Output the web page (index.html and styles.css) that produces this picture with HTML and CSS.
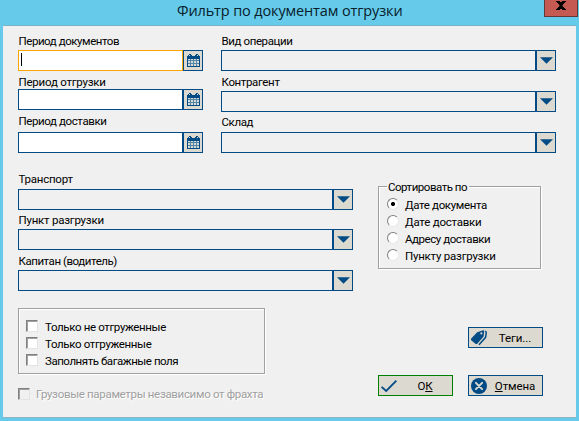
FILE: index.html
```html
<!DOCTYPE html>
<html lang="ru">
<head>
<meta charset="utf-8">
<title>Фильтр по документам отгрузки</title>
<link rel="stylesheet" href="styles.css">
</head>
<body>
<svg width="0" height="0" class="defs">
  <symbol id="cal" viewBox="0 0 13 13"><path class="ink" d="M0 2h1V1h1V0h2v1h1v1h3V1h1V0h2v1h1v1h1v11H0z"/><path class="holes" d="M2 1h1v1H2zM10 1h1v1h-1zM1 5h2v1H1zM4 5h2v1H4zM7 5h2v1H7zM10 5h2v1h-2zM1 7h2v2H1zM4 7h2v2H4zM7 7h2v2H7zM10 7h2v2h-2zM1 10h2v2H1zM4 10h2v2H4zM7 10h2v2H7zM10 10h2v2h-2z"/><path class="rules" d="M1 6h11v1H1zM1 9h11v1H1zM3 5h1v7H3zM6 5h1v7H6zM9 5h1v7H9z"/></symbol>
  <symbol id="arrow" viewBox="0 0 13 7"><path class="ink" d="M0 .3h13L6.5 6.8z"/></symbol>
</svg>
<div class="window">
  <header class="titlebar">
    <h1>Фильтр по документам отгрузки</h1>
    <button class="close"><svg width="10" height="9" viewBox="0 0 10 9"><path d="M0 0h4v1h2V0h4v1H9v1H8v1H7v1H6.500v1H7v1h1v1h1v1h1v1H6V8H4v1H0V8h1V7h1V6h1V5h.5V4H3V3H2V2H1V1H0z"/></svg></button>
  </header>
  <main class="client">
    <section class="top">
      <div class="periods">
        <div class="field h17"><label class="w1">Период документов</label><div class="control focus"><span class="input"><i class="caret"></i></span><button class="pick"><svg width="13" height="13"><use href="#cal"/></svg></button></div></div>
        <div class="field h15"><label class="w2">Период отгрузки</label><div class="control"><span class="input"></span><button class="pick"><svg width="13" height="13"><use href="#cal"/></svg></button></div></div>
        <div class="field h19"><label class="w3">Период доставки</label><div class="control"><span class="input"></span><button class="pick"><svg width="13" height="13"><use href="#cal"/></svg></button></div></div>
      </div>
      <div class="lists">
        <div class="field h17"><label class="w4">Вид операции</label><div class="control"><span class="combo"></span><button class="pick"><svg width="13" height="7"><use href="#arrow"/></svg></button></div></div>
        <div class="field h17"><label class="w5">Контрагент</label><div class="control"><span class="combo"></span><button class="pick"><svg width="13" height="7"><use href="#arrow"/></svg></button></div></div>
        <div class="field h18 tight"><label class="w6">Склад</label><div class="control"><span class="combo"></span><button class="pick"><svg width="13" height="7"><use href="#arrow"/></svg></button></div></div>
      </div>
    </section>
    <section class="middle">
      <div class="lists">
        <div class="field h18"><label class="w7">Транспорт</label><div class="control"><span class="combo"></span><button class="pick"><svg width="13" height="7"><use href="#arrow"/></svg></button></div></div>
        <div class="field h17 tight"><label class="w8">Пункт разгрузки</label><div class="control"><span class="combo"></span><button class="pick"><svg width="13" height="7"><use href="#arrow"/></svg></button></div></div>
        <div class="field h17"><label class="w9">Капитан (водитель)</label><div class="control"><span class="combo"></span><button class="pick"><svg width="13" height="7"><use href="#arrow"/></svg></button></div></div>
      </div>
      <div class="group sort">
        <div class="legend">Сортировать по</div>
        <div class="option"><i class="radio on"></i><span class="r1">Дате документа</span></div>
        <div class="option"><i class="radio"></i><span class="r2">Дате доставки</span></div>
        <div class="option"><i class="radio"></i><span class="r3">Адресу доставки</span></div>
        <div class="option"><i class="radio"></i><span class="r4">Пункту разгрузки</span></div>
      </div>
    </section>
    <section class="bottom">
      <div class="checks">
        <div class="group flags">
          <div class="option"><i class="box"></i><span class="c1">Только не отгруженные</span></div>
          <div class="option"><i class="box"></i><span class="c2">Только отгруженные</span></div>
          <div class="option"><i class="box"></i><span class="c3">Заполнять багажные поля</span></div>
        </div>
        <div class="option disabled"><i class="box"></i><span class="c4">Грузовые параметры независимо от фрахта</span></div>
      </div>
      <div class="actions">
        <button class="btn tags"><svg width="16" height="16" viewBox="0 0 16 16"><path class="ink" fill-rule="evenodd" d="M.2 8.500 6.200 2.200 11.500.4Q13.200 0 13.200 1.500L12.600 6.500 6.500 13.500Q5.300 14.600 4.200 13.500L.5 10.500Q-.4 9.500 .2 8.500zM10.300 2.200a1.100 1.100 0 1 0 .1 0z"/><path class="line" d="M14.200 1.300Q15.400 1.600 15.200 3L14.600 7.300 8 14.700"/></svg><span>Теги...</span></button>
        <button class="btn ok"><svg width="16" height="16" viewBox="0 0 16 16"><path class="line thick" d="M.6 8.800 5.200 13 15.400 2.700"/></svg><span>О<u>К</u></span></button>
        <button class="btn cancel"><svg width="16" height="16" viewBox="0 0 16 16"><circle class="ink" cx="8" cy="8" r="8"/><path class="cross" d="m4.900 4.900 6.200 6.200m0-6.200-6.200 6.200"/></svg><span><u>О</u>тмена</span></button>
      </div>
    </section>
  </main>
</div>
</body>
</html>
```
FILE: styles.css
```css
* { box-sizing: border-box; }
body { margin: 0; font: 11.5px/16px Roboto, "Liberation Sans", sans-serif; letter-spacing: -.36px; color: #000; }
button { padding: 0; margin: 0; border-radius: 0; font: inherit; letter-spacing: inherit; color: inherit; }
svg { display: block; flex: none; }
.defs { position: absolute; }
.ink { fill: #004b85; }
.holes { fill: #d3dad8; }
.rules { fill: #5585a5; }
.line { fill: none; stroke: #004b85; stroke-width: 1.5; }
.thick { stroke-width: 1.8; }
.cross { fill: none; stroke: #dcd9d0; stroke-width: 2; stroke-linecap: round; }

.window { width: 579px; height: 421px; padding: 0 3px 3px; background: #66cbea; }
.titlebar { display: flex; height: 25px; margin-right: -2px; }
h1 { flex: 1; margin: 0; padding-left: 174px; font: 14.5px/21px "Open Sans", sans-serif; letter-spacing: -.13px; white-space: nowrap; color: #08202a; }
.close { display: flex; justify-content: center; width: 34px; height: 17px; padding-top: 1px; border: 1px solid #633937; border-top: 0; background: #c45a52; }

.client { height: 393px; padding: 7px 19px 0 15px; border-top: 1px solid #78b4c8; border-bottom: 1px solid #8eb5c3; background: #f0f0f0; }
.top { display: grid; grid-template-columns: 185px 335px; column-gap: 18px; height: 138px; }
.middle { display: grid; grid-template-columns: 335px 163px; column-gap: 25px; height: 137px; }
.bottom { display: flex; justify-content: space-between; }
.field + .field { margin-top: 3px; }
.field + .field.tight { margin-top: 2px; }
label { display: block; padding-left: .5px; white-space: nowrap; }
.h15 label { height: 15px; }
.h17 label { height: 17px; }
.h18 label { height: 18px; }
.h19 label { height: 19px; }
.w1, .w9, .r3, .c3 { letter-spacing: -.45px; }
.w2, .w7, .w8, .r2, .r4 { letter-spacing: -.23px; }
.w3, .w4, .w6 { letter-spacing: -.4px; }
.c4 { letter-spacing: -.32px; }
.control { display: flex; height: 21px; }
.input, .combo { flex: 1; border: 1px solid #004b85; }
.input { background: #fff; }
.focus .input { padding: 2px; border-color: #ffa500; }
.caret { display: block; width: 1px; height: 13px; background: #000; }
.pick { display: grid; place-items: center; width: 20px; border: 1px solid #004b85; background: #dcd9d0; }

.group { border: 1px solid #a0a0a0; box-shadow: 1px 1px #fff, inset 1px 1px #fff; }
.option { display: flex; height: 17px; white-space: nowrap; }
.sort { height: 83px; margin-top: 15px; padding: 0 0 0 8px; }
.legend { width: 82px; height: 16px; margin-top: -8px; padding-left: 1px; background: #f0f0f0; letter-spacing: -.48px; white-space: nowrap; }
.legend + .option { margin-top: 3px; }
.radio { width: 12px; height: 12px; margin: 0 6px 0 0; border: 1px solid; border-color: #808080 #e8e8e8 #e8e8e8 #808080; border-radius: 50%; background: #fff; }
.sort .option { line-height: 15px; }
.radio.on { background: radial-gradient(circle, #000 0 1.800px, #fff 2.300px); }
.flags { width: 247px; height: 66px; padding: 11px 0 0 7px; }
.box { width: 12px; height: 12px; margin-right: 7px; border: 1px solid; border-color: #808080 #e3e3e3 #e3e3e3 #808080; background: #fff; box-shadow: inset 1px 1px #a0a0a0; }
.flags .option { line-height: 14px; }
.disabled { margin-top: 14px; color: #a0a0a0; line-height: 13px; text-shadow: 1px 1px #fff; }
.disabled .box { margin-right: 6px; background: #f0f0f0; }

.actions { display: grid; grid-template-columns: 75px 75px; grid-auto-rows: 21px; gap: 27px 15px; padding: 19px 14px 0 0; }
.btn { display: grid; grid-template-columns: 16px 1fr; align-items: center; padding: 0 2px; border: 1px solid #004b85; background: #dcd9d0; white-space: nowrap; letter-spacing: -.1px; }
.btn span { padding-left: 3px; }
.tags { grid-column: 2; }
.btn.ok { border-color: #008000; }
.btn u { text-underline-offset: 1px; }
```
